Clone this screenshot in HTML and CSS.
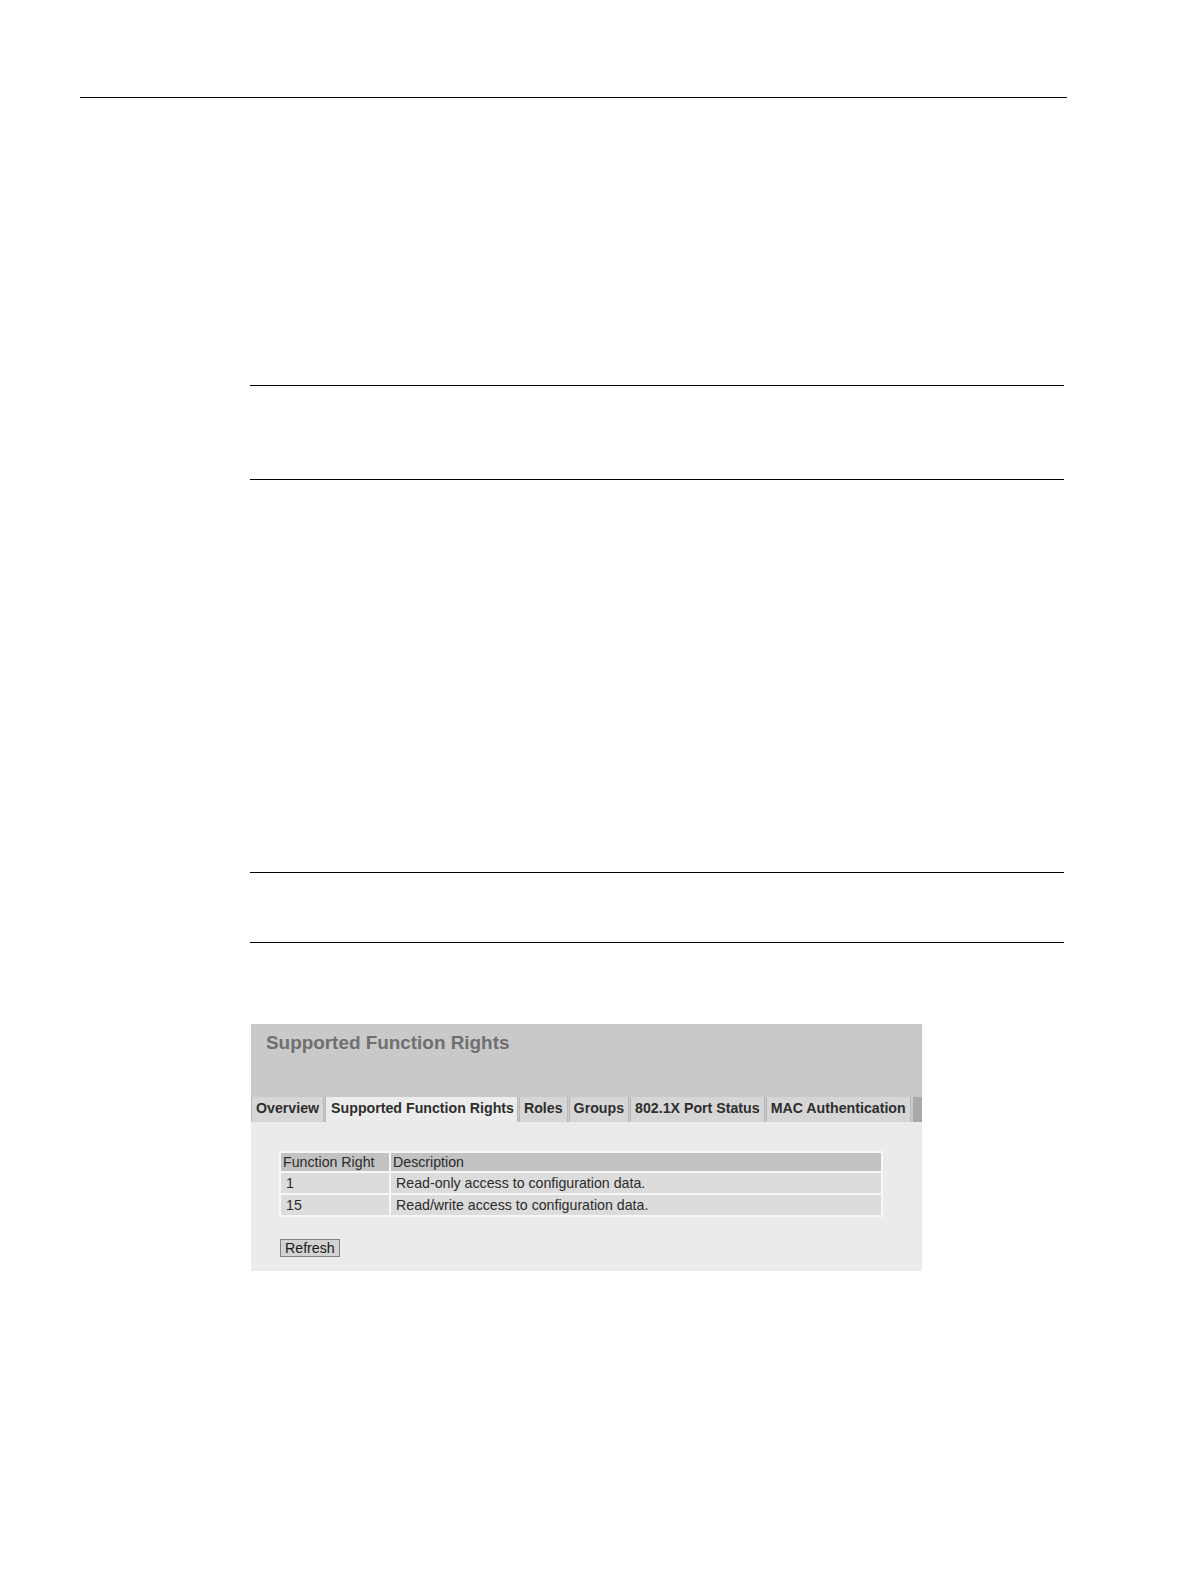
FILE: index.html
```html
<!DOCTYPE html>
<html>
<head>
<meta charset="utf-8">
<link rel="stylesheet" href="styles.css">
</head>
<body>
<div class="page">
  <div class="top-rule"></div>
  <div class="content">
    <div class="note note-a"></div>
    <div class="note note-b"></div>
    <div class="shot">
      <div class="shot-head">
        <h1 class="shot-title">Supported Function Rights</h1>
      </div>
      <div class="tabs">
        <div class="tab">Overview</div>
        <div class="tab active">Supported Function Rights</div>
        <div class="tab">Roles</div>
        <div class="tab">Groups</div>
        <div class="tab">802.1X Port Status</div>
        <div class="tab">MAC Authentication</div>
        <div class="tab-fill"></div>
      </div>
      <div class="shot-body">
        <table class="rights">
          <tr class="hrow"><th class="c1">Function Right</th><th class="c2">Description</th></tr>
          <tr><td>1</td><td>Read-only access to configuration data.</td></tr>
          <tr><td>15</td><td>Read/write access to configuration data.</td></tr>
        </table>
        <button class="refresh">Refresh</button>
      </div>
    </div>
  </div>
</div>
</body>
</html>
```
FILE: styles.css
```css
html, body {
  margin: 0;
  padding: 0;
  background: #ffffff;
}
.page {
  padding-top: 97px;
  font-family: "Liberation Sans", Arial, sans-serif;
}
.top-rule {
  margin-left: 80px;
  width: 987px;
  border-top: 1px solid #000;
}
.content {
  margin-left: 250px;
  width: 814px;
}
.note {
  border-top: 1px solid #000;
  border-bottom: 1px solid #000;
}
.note-a {
  margin-top: 287px;
  height: 93px;
}
.note-b {
  margin-top: 392px;
  height: 69px;
}
.shot {
  margin-top: 81px;
  margin-left: 1px;
  width: 671px;
}
.shot-head {
  background: #c9c9c9;
  height: 73px;
  padding: 9px 0 0 15px;
  box-sizing: border-box;
}
.shot-title {
  margin: 0;
  font-size: 18.9px;
  font-weight: bold;
  color: #6f6f6f;
  line-height: 20px;
}
.tabs {
  display: flex;
  height: 25px;
  background: #c9c9c9;
  gap: 2px;
  padding-left: 1px;
}
.tab {
  background: #d6d6d6;
  font-size: 14.2px;
  font-weight: bold;
  color: #2e2e2e;
  padding: 3px 4px 0 4px;
  box-sizing: border-box;
  border-left: 1px solid #b9b9b9;
  border-right: 1px solid #b9b9b9;
  margin-left: -1px;
  line-height: 16px;
  white-space: nowrap;
}
.tab.active {
  background: #ececec;
  padding-left: 5px;
  padding-right: 3px;
}
.tab-fill {
  flex: 1;
  background: #a9a9a9;
}
.shot-body {
  background: #ebebeb;
  height: 149px;
  padding: 29px 0 0 28px;
  box-sizing: border-box;
}
.rights {
  border-collapse: separate;
  border-spacing: 2px;
  background: #f7f7f7;
  font-size: 14.2px;
  color: #2b2b2b;
}
.rights th {
  background: #c2c2c2;
  font-weight: normal;
  text-align: left;
  height: 18px;
  padding: 0 0 0 2px;
  line-height: 18px;
}
.rights td {
  background: #dcdcdc;
  height: 20px;
  padding: 0 0 0 5px;
  line-height: 20px;
}
.rights .c1 { width: 106px; }
.rights .c2 { width: 488px; }
.refresh {
  display: block;
  margin: 22px 0 0 1px;
  font-family: "Liberation Sans", Arial, sans-serif;
  font-size: 14.2px;
  color: #1a1a1a;
  background: #d2d2d2;
  border: 1px solid #7f7f7f;
  padding: 0 4px;
  height: 18px;
  line-height: 16px;
  border-radius: 0;
}
```
